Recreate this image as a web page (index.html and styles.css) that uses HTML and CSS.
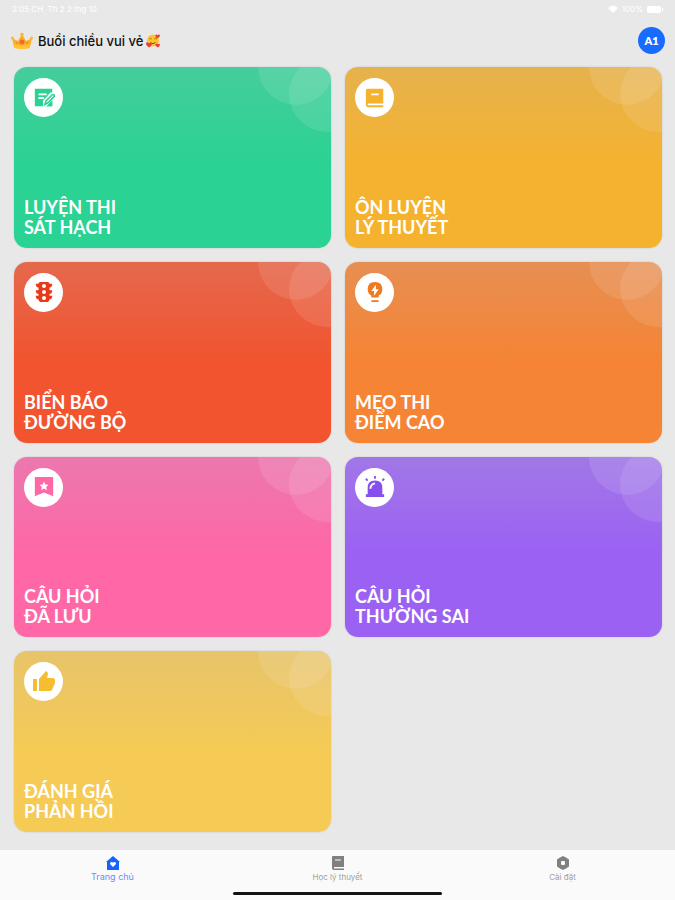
FILE: index.html
```html
<!DOCTYPE html>
<html lang="vi">
<head>
<meta charset="utf-8">
<meta name="viewport" content="width=device-width, initial-scale=1">
<title>Trang chủ</title>
<link rel="stylesheet" href="styles.css">
</head>
<body>
<div class="status">
  <span>2:05 CH&nbsp; Th 2 2 thg 10</span>
  <span class="status-right">
    <svg width="10" height="8" viewBox="0 0 10 8" aria-hidden="true"><path d="M0 3Q5-2 10 3L5 8Z" fill="#fff"/></svg>
    <span>100%</span>
    <svg width="16" height="7" viewBox="0 0 16 7" aria-hidden="true"><rect width="14" height="7" rx="2" fill="#fff"/><rect x="15" y="2" width="1" height="3" fill="#fff"/></svg>
  </span>
</div>
<header class="header">
  <svg class="crown" viewBox="0 0 22 18" aria-hidden="true">
    <path d="M3 15 1 6l6 3 4-7 4 7 6-3-2 9q-8 3-16 0Z" fill="#ffad22"/>
    <path d="M3 12q8 3 16 0v4q-8 2-16 0Z" fill="#ffc233"/>
    <circle cx="1.500" cy="6" r="1.500" fill="#ffb52c"/><circle cx="20.500" cy="6" r="1.500" fill="#ffb52c"/><circle cx="11" cy="2.500" r="1.700" fill="#ffb52c"/>
    <circle cx="11" cy="10" r="2.500" fill="#ef6a2e"/><circle cx="6" cy="11" r="1" fill="#f58a2b"/><circle cx="16" cy="11" r="1" fill="#f58a2b"/>
  </svg>
  <h1 class="greeting">Buổi chiều vui vẻ</h1>
  <svg class="face" viewBox="0 0 14 14" aria-hidden="true">
    <circle cx="7" cy="6.500" r="6" fill="#fdc62f"/>
    <path d="M3.500 5q1-1.500 2 0M8.500 5q1-1.500 2 0M4.500 8.500q2.500 2.500 5 0" fill="none" stroke="#8a4a10" stroke-width="1"/>
    <path d="M3 13.500Q-.5 11 0 9q1.500-1.500 2.800.3Q4.500 8 6 9.800 6 12 3 13.500Z" fill="#ee3b3f"/>
    <path d="M12 13.500q-3-1.500-2.500-3.500 1.300-1.200 2.300.3Q13 9 14 10.300q0 2-2 3.200Z" fill="#ee3b3f"/>
    <path d="M11.500 4.500Q9 3 9.500 1q1-1.200 2 .2Q13-.3 14 1.200q0 2-2.500 3.300Z" fill="#ee3b3f"/>
  </svg>
  <button class="grade" type="button">A1</button>
</header>
<main class="grid">
  <a class="card green" href="#thi"><span class="badge">
    <svg viewBox="0 0 24 24" aria-hidden="true"><path d="M2 2h19v19H2Z" fill="currentColor"/><path d="M6 8h9M6 12h6" stroke="#fff" stroke-width="2"/><path d="M11 21v-6l8-9h5v5L15 21Z" fill="#fff"/><path d="m13 19 1-3.500 7-7q1-.8 1.900.1t.1 1.900l-7 7Z" fill="#fff" stroke="currentColor" stroke-width="1.700"/><path d="M21 15v6h-6Z" fill="currentColor"/></svg></span>
    <span class="title">LUYỆN THI<br>SÁT HẠCH</span></a>
  <a class="card amber" href="#ly-thuyet"><span class="badge">
    <svg viewBox="0 0 24 24" aria-hidden="true"><path d="M4 2h17v16H5q-1 0-1 1t1 1h16v2H5q-3 0-3-3V4q0-2 2-2Z" fill="currentColor"/><path d="M8 8h8" stroke="#fff" stroke-width="2"/></svg></span>
    <span class="title">ÔN LUYỆN<br>LÝ THUYẾT</span></a>
  <a class="card red" href="#bien-bao"><span class="badge">
    <svg viewBox="0 0 24 24" aria-hidden="true"><path d="M8 1h8q2 0 2 2h3q0 4-3 4v3h3q0 4-3 4v2h3q0 4-3 4 0 3-2 3H8q-2 0-2-3-3 0-3-4h3v-2q-3 0-3-4h3V7Q3 7 3 3h3q0-2 2-2Z" fill="currentColor"/><circle cx="12" cy="5.500" r="2.200" fill="#fff"/><circle cx="12" cy="12" r="2.200" fill="#fff"/><circle cx="12" cy="18.500" r="2.200" fill="#fff"/></svg></span>
    <span class="title">BIỂN BÁO<br>ĐƯỜNG BỘ</span></a>
  <a class="card orange" href="#meo"><span class="badge">
    <svg viewBox="0 0 24 24" aria-hidden="true"><path d="M8 18v-2q-4-2-4-7 0-8 8-8t8 8q0 5-4 7v2Z" fill="currentColor"/><path d="M8 22h8" stroke="currentColor" stroke-width="2"/><path d="M13 4 8 11h3v5l5-7h-3Z" fill="#fff"/></svg></span>
    <span class="title">MẸO THI<br>ĐIỂM CAO</span></a>
  <a class="card pink" href="#da-luu"><span class="badge">
    <svg viewBox="0 0 24 24" aria-hidden="true"><path d="M2 1h20v21l-10-4-10 4Z" fill="currentColor"/><path d="m12 6 1.500 3.200 3.500.4-2.600 2.400.7 3.500-3.100-1.800-3.100 1.800.7-3.500L7 9.600l3.500-.4Z" fill="#fff"/></svg></span>
    <span class="title">CÂU HỎI<br>ĐÃ LƯU</span></a>
  <a class="card purple" href="#sai"><span class="badge">
    <svg viewBox="0 0 24 24" aria-hidden="true"><path d="M4 20v-7q0-8 8-8t8 8v7h2v3H2v-3Z" fill="currentColor"/><path d="M12 0v3M2 3l2 2M22 3l-2 2" stroke="currentColor" stroke-width="2"/><path d="M7 14q0-5 5-6" fill="none" stroke="#fff" stroke-width="2"/></svg></span>
    <span class="title">CÂU HỎI<br>THƯỜNG SAI</span></a>
  <a class="card yellow" href="#danh-gia"><span class="badge">
    <svg class="thumb" viewBox="0 0 24 24" aria-hidden="true"><path d="M1 9h4v12H1ZM7 21V9l7-8q2 1 2 3l-1 4h6q2 0 2 2v3l-3 7q-.5 1-2 1Z" fill="currentColor"/></svg></span>
    <span class="title">ĐÁNH GIÁ<br>PHẢN HỒI</span></a>
</main>
<nav class="tabs">
  <a class="tab active" href="#home"><svg viewBox="0 0 14 14" aria-hidden="true"><path d="m7 0 7 6h-1v8H1V6H0Z" fill="currentColor"/><path d="M7 11 4 8q0-3 3-1.500Q10 5 10 8Z" fill="#fff"/></svg>Trang chủ</a>
  <a class="tab" href="#hoc"><svg viewBox="0 0 14 14" aria-hidden="true"><path d="M2 0h11v11H3v1h10v2H3q-2 0-2-2V1q0-1 1-1Z" fill="currentColor"/><path d="M4 4h6M3 12h10" stroke="#fafafa" stroke-width="1"/></svg>Học lý thuyết</a>
  <a class="tab" href="#cai-dat"><svg viewBox="0 0 14 14" aria-hidden="true"><path d="m7 0 3 1.500 3 2v7l-3 2L7 14l-3-1.500-3-2v-7l3-2Z" fill="currentColor"/><rect x="5" y="5" width="4" height="4" rx="1" fill="#fafafa"/></svg>Cài đặt</a>
</nav>
<div class="home-bar"></div>
</body>
</html>
```
FILE: styles.css
```css
* { box-sizing: border-box; }
body {
  margin: 0;
  min-height: 100vh;
  display: flex;
  flex-direction: column;
  background: #e8e8e8;
  font-family: Lato, "Noto Sans", sans-serif;
}
a { color: inherit; text-decoration: none; }
.status {
  display: flex;
  justify-content: space-between;
  height: 18px;
  padding: 0 12px;
  align-items: center;
  color: #fff;
  font: 8px/16px Inter, "Noto Sans", sans-serif;
}
.status-right { display: flex; align-items: center; gap: 4px; }
.header {
  display: flex;
  align-items: center;
  height: 45px;
  padding: 0 10px 0 11px;
}
.crown { width: 22px; height: 18px; margin-right: 5px; }
.greeting {
  margin: 0 3px 0 0;
  font: 500 13px/18px Inter, "Noto Sans", sans-serif;
  color: #111;
}
.face { width: 14px; height: 14px; }
.grade {
  width: 27px;
  height: 27px;
  margin-left: auto;
  padding: 0;
  border: 0;
  border-radius: 50%;
  background: #176bff;
  color: #fff;
  font: 800 11px/27px Lato, sans-serif;
}
.grid {
  flex: 1;
  display: grid;
  grid-template-columns: 1fr 1fr;
  grid-template-rows: repeat(4, minmax(140px, 1fr));
  gap: 14px;
  padding: 4px 13px 18px 14px;
}
.card {
  position: relative;
  overflow: hidden;
  display: flex;
  flex-direction: column;
  justify-content: space-between;
  align-items: flex-start;
  padding: 11px 10px;
  border-radius: 13px;
  color: #fff;
  background: linear-gradient(var(--top), var(--main) 55%);
  box-shadow: 0 0 2px rgba(0, 0, 0, 0.15);
}
.card::before,
.card::after {
  content: "";
  position: absolute;
  width: 76px;
  height: 76px;
  border-radius: 50%;
  background: rgba(255, 255, 255, 0.1);
}
.card::before { top: -38px; right: -3px; }
.card::after { top: -11px; right: -34px; }
.green { --top: #45cd9b; --main: #2ad293; }
.amber { --top: #e6b24d; --main: #f5b22f; }
.red { --top: #e5684d; --main: #f1542f; }
.orange { --top: #e68f52; --main: #f58434; }
.pink { --top: #ec78ae; --main: #ff67a6; }
.purple { --top: #a177e7; --main: #9b61f3; }
.yellow { --top: #e7c46a; --main: #f5ca55; }
.badge {
  display: flex;
  align-items: center;
  justify-content: center;
  width: 39px;
  height: 39px;
  border-radius: 50%;
  background: #fff;
  color: var(--main);
}
.red .badge { color: #e8391a; }
.orange .badge { color: #f07a20; }
.purple .badge { color: #8750ee; }
.yellow .badge { color: #f5bd30; }
.badge svg { width: 22px; height: 22px; }
.badge .thumb { width: 24px; height: 24px; }
.title { font-size: 18px; font-weight: 700; line-height: 20px; }
.tabs {
  display: grid;
  grid-template-columns: repeat(3, 1fr);
  height: 40px;
  padding-top: 6px;
  background: #fafafa;
}
.tab {
  display: flex;
  flex-direction: column;
  align-items: center;
  gap: 1px;
  color: #a0a0a0;
  font: 8px/12px Inter, "Noto Sans", sans-serif;
}
.tab svg { width: 14px; height: 14px; color: #808080; }
.active { color: #6c8cf5; font-size: 9px; }
.active svg { color: #1463ff; }
.home-bar {
  display: flow-root;
  height: 10px;
  background: #fafafa;
}
.home-bar::before {
  content: "";
  display: block;
  width: 31%;
  height: 3px;
  margin: 2px auto 0;
  border-radius: 2px;
  background: #111;
}
```
